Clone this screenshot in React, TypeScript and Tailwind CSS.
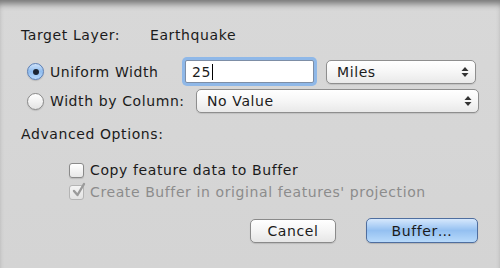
import React from "react";

/** Aqua-style radio button. */
function Radio({ checked }: { checked?: boolean }) {
  return (
    <span
      className={
        checked
          ? "flex h-[17px] w-[17px] shrink-0 items-center justify-center rounded-full border border-[#5b7fb5] bg-gradient-to-b from-[#cfe3fa] via-[#8fbcef] to-[#b9dafc] shadow-[0_1px_1px_rgba(0,0,0,0.15)]"
          : "flex h-[17px] w-[17px] shrink-0 items-center justify-center rounded-full border border-[#8a8a8a] bg-gradient-to-b from-[#ffffff] via-[#f2f2f2] to-[#e4e4e4] shadow-[0_1px_1px_rgba(0,0,0,0.12)]"
      }
    >
      {checked && <span className="h-[6px] w-[6px] rounded-full bg-[#1c2533]" />}
    </span>
  );
}

/** Aqua-style checkbox, optionally checked and disabled. */
function Checkbox({ checked, disabled }: { checked?: boolean; disabled?: boolean }) {
  return (
    <span
      className={
        disabled
          ? "relative flex h-[15px] w-[15px] shrink-0 items-center justify-center rounded-[3px] border border-[#b4b4b4] bg-gradient-to-b from-[#f4f4f4] to-[#e2e2e2]"
          : "relative flex h-[15px] w-[15px] shrink-0 items-center justify-center rounded-[3px] border border-[#8a8a8a] bg-gradient-to-b from-[#ffffff] to-[#e8e8e8] shadow-[0_1px_1px_rgba(0,0,0,0.12)]"
      }
    >
      {checked && (
        <svg width="16" height="16" viewBox="0 0 16 16" className="absolute -top-[4px] left-[1px]">
          <path
            d="M3 9 L6.5 13 L13 2"
            fill="none"
            stroke={disabled ? "#9a9a9a" : "#222"}
            strokeWidth="2.4"
            strokeLinecap="round"
            strokeLinejoin="round"
          />
        </svg>
      )}
    </span>
  );
}

/** Pop-up menu with stacked up/down arrows. */
function Popup({ label, width }: { label: string; width: string }) {
  return (
    <div
      className={`${width} flex h-[24px] items-center justify-between rounded-[5px] border border-[#8e8e8e] bg-gradient-to-b from-[#ffffff] via-[#f6f6f6] to-[#e9e9e9] pl-[10px] pr-[6px] shadow-[0_1px_1px_rgba(0,0,0,0.1)]`}
    >
      <span>{label}</span>
      <svg width="8" height="12" viewBox="0 0 8 12">
        <path d="M4 1 L7.5 5 L0.5 5 Z" fill="#333" />
        <path d="M4 11 L7.5 7 L0.5 7 Z" fill="#333" />
      </svg>
    </div>
  );
}

export default function App() {
  return (
    <div
      className="flex h-[268px] w-[500px] flex-col overflow-hidden bg-gradient-to-b from-[#d8d8d8] to-[#d4d4d4] pl-[21px] text-[14px] leading-none tracking-[0.6px] text-[#1b1b1b] shadow-[inset_0_7px_6px_-3px_rgba(0,0,0,0.45)]"
      style={{ fontFamily: '"DejaVu Sans", "Noto Sans", sans-serif' }}
    >
      {/* Target layer */}
      <div className="mt-[28px] flex h-[14px] items-center">
        <span className="w-[129px]">Target Layer:</span>
        <span>Earthquake</span>
      </div>

      {/* Uniform width row */}
      <div className="mt-[16px] flex h-[27px] items-center">
        <span className="ml-[6px] mr-[6px]">
          <Radio checked />
        </span>
        <span className="w-[135px]">Uniform Width</span>
        <div className="flex h-[23px] w-[129px] items-center rounded-[2px] border border-[#7d8ea6] bg-white pl-[6px] shadow-[0_0_0_3px_#8fb8e8]">
          25<span className="ml-[1px] h-[16px] w-[1px] bg-black" />
        </div>
        <div className="ml-[12px]">
          <Popup label="Miles" width="w-[150px]" />
        </div>
      </div>

      {/* Width by column row */}
      <div className="mt-[4px] flex h-[24px] items-center">
        <span className="ml-[6px] mr-[6px]">
          <Radio />
        </span>
        <span className="w-[146px]">Width by Column:</span>
        <Popup label="No Value" width="w-[283px]" />
      </div>

      {/* Advanced options */}
      <div className="mt-[14px] flex h-[14px] items-center">Advanced Options:</div>

      <div className="mt-[21px] flex h-[16px] items-center pl-[48px]">
        <Checkbox />
        <span className="ml-[6px]">Copy feature data to Buffer</span>
      </div>
      <div className="mt-[6px] flex h-[16px] items-center pl-[48px] text-[#8c8c8c]">
        <Checkbox checked disabled />
        <span className="ml-[6px]">Create Buffer in original features' projection</span>
      </div>

      {/* Buttons */}
      <div className="mt-[18px] flex items-center pl-[229px]">
        <button className="flex h-[24px] w-[86px] items-center justify-center rounded-[5px] border border-[#8a8a8a] bg-gradient-to-b from-[#ffffff] via-[#f4f4f4] to-[#e6e6e6] shadow-[0_1px_1px_rgba(0,0,0,0.12)]">
          Cancel
        </button>
        <button className="ml-[30px] flex h-[25px] w-[112px] items-center justify-center rounded-[5px] border border-[#4f6e9f] bg-gradient-to-b from-[#d6e8fc] via-[#94c0f1] to-[#b8dafb] shadow-[0_1px_1px_rgba(0,0,0,0.15)]">
          Buffer…
        </button>
      </div>
    </div>
  );
}
